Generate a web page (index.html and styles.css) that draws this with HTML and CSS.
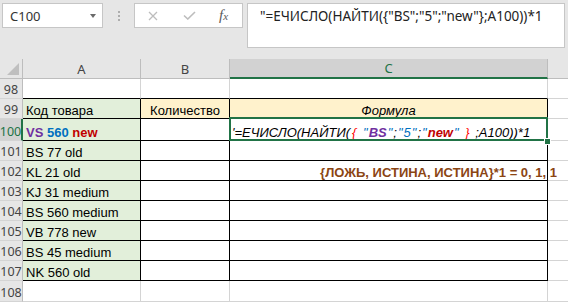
FILE: index.html
```html
<!DOCTYPE html>
<html lang="ru">
<head>
    <meta charset="UTF-8">
    <meta name="viewport" content="width=device-width, initial-scale=1.0">
    <title>ЕЧИСЛО и НАЙТИ</title>
    <link rel="stylesheet" href="styles.css">
</head>
<body>
    <div class="topbar">
        <div class="namebox"><span>C100</span><span class="caret"></span></div>
        <div class="grip"><i></i><i></i><i></i></div>
        <div class="fxbtns">
            <svg class="cancel" width="10" height="10" viewBox="0 0 10 10"><path d="M1 1L9 9M9 1L1 9" stroke="#bdbdbd" stroke-width="1.3" fill="none"/></svg>
            <svg class="enter" width="13" height="9" viewBox="0 0 13 9"><path d="M1 4.5L4.8 8L12 1" stroke="#bdbdbd" stroke-width="1.6" fill="none"/></svg>
            <span class="fx">f<span class="fx-x">x</span></span>
        </div>
        <div class="formula">"=ЕЧИСЛО(НАЙТИ({"BS";"5";"new"};A100))*1</div>
    </div>

    <div class="sheet">
        <!-- column headers -->
        <div class="c h corner"><span class="tri"></span></div>
        <div class="c h">A</div>
        <div class="c h">B</div>
        <div class="c h cur">C</div>
        <div class="c h last"></div>

        <div class="c rh">98</div>
        <div class="c bt"></div>
        <div class="c bt"></div>
        <div class="c bt"></div>
        <div class="c last"></div>

        <div class="c rh">99</div>
        <div class="c b green">Код товара</div>
        <div class="c b yellow mid">Количество</div>
        <div class="c b yellow mid it">Формула</div>
        <div class="c last"></div>

        <div class="c rh cur">100</div>
        <div class="c b green bold"><span class="purple">VS</span>&nbsp;<span class="blue">560</span>&nbsp;<span class="red">new</span></div>
        <div class="c b"></div>
        <div class="c b it active">'=ЕЧИСЛО(НАЙТИ(<span class="brace">{</span>&nbsp;<span class="q">"</span><span class="purple bold">BS</span><span class="q">"</span>;<span class="q">"</span><span class="blue">5</span><span class="q">"</span>;<span class="q">"</span><span class="red bold">new</span><span class="q">"</span>&nbsp;<span class="brace">}</span>&nbsp;;A100))*1
            <div class="sel"><i class="handle"></i></div>
        </div>
        <div class="c last"></div>

        <div class="c rh">101</div>
        <div class="c b green">BS 77 old</div>
        <div class="c b"></div>
        <div class="c b"></div>
        <div class="c last"></div>

        <div class="c rh">102</div>
        <div class="c b green">KL 21 old</div>
        <div class="c b"></div>
        <div class="c b end"><span class="note">{ЛОЖЬ, ИСТИНА, ИСТИНА}*1 = 0, 1, 1</span></div>
        <div class="c last"></div>

        <div class="c rh">103</div>
        <div class="c b green">KJ 31 medium</div>
        <div class="c b"></div>
        <div class="c b"></div>
        <div class="c last"></div>

        <div class="c rh">104</div>
        <div class="c b green">BS 560 medium</div>
        <div class="c b"></div>
        <div class="c b"></div>
        <div class="c last"></div>

        <div class="c rh">105</div>
        <div class="c b green">VB 778 new</div>
        <div class="c b"></div>
        <div class="c b"></div>
        <div class="c last"></div>

        <div class="c rh">106</div>
        <div class="c b green">BS 45 medium</div>
        <div class="c b"></div>
        <div class="c b"></div>
        <div class="c last"></div>

        <div class="c rh">107</div>
        <div class="c b green">NK 560 old</div>
        <div class="c b"></div>
        <div class="c b"></div>
        <div class="c last"></div>

        <div class="c rh">108</div>
        <div class="c"></div>
        <div class="c"></div>
        <div class="c"></div>
        <div class="c last"></div>
    </div>
</body>
</html>
```

FILE: styles.css
```css
body {
    margin: 0;
    width: 568px;
    height: 302px;
    overflow: hidden;
    background-color: #fff;
    font-family: "Liberation Sans", Arial, sans-serif;
}

/* formula bar */
.topbar {
    display: flex;
    align-items: flex-start;
    height: 59px;
    padding: 3px 0 0 2px;
    box-sizing: border-box;
    background-color: #e6e6e6;
}

.namebox {
    width: 101px;
    height: 25px;
    box-sizing: border-box;
    border: 1px solid #c6c6c6;
    background-color: #fff;
    display: flex;
    align-items: center;
    justify-content: space-between;
    padding: 0 6px 0 7px;
    font: 13px/18px "Noto Sans", sans-serif;
    color: #333;
}

.caret {
    border-left: 3px solid transparent;
    border-right: 3px solid transparent;
    border-top: 4px solid #6a6a6a;
}

.grip {
    width: 31px;
    height: 25px;
    display: flex;
    flex-direction: column;
    align-items: center;
    justify-content: center;
    gap: 2px;
}

.grip i {
    width: 2px;
    height: 2px;
    background-color: #adadad;
}

.fxbtns {
    width: 109px;
    height: 25px;
    box-sizing: border-box;
    border: 1px solid #c6c6c6;
    background-color: #fff;
    display: flex;
    align-items: center;
    padding-left: 13px;
}

.enter {
    margin-left: 25px;
}

.fx {
    margin-left: 23px;
    font: italic 15px "Liberation Serif", serif;
    color: #5a5a5a;
}

.fx-x {
    font-size: 11px;
}

.formula {
    margin-left: 4px;
    width: 318px;
    height: 45px;
    box-sizing: border-box;
    border: 1px solid #c6c6c6;
    background-color: #fff;
    padding: 3px 0 0 12px;
    font: 13.5px/18px "Noto Sans", sans-serif;
    color: #222;
    white-space: nowrap;
    overflow: hidden;
}

/* sheet grid */
.sheet {
    display: grid;
    grid-template-columns: 23px 118px 89px 318px 20px;
    grid-template-rows: 20px 20px 20px 22px repeat(7, 20px) 21px;
}

.c {
    box-sizing: border-box;
    border-right: 1px solid #d4d4d4;
    border-bottom: 1px solid #d4d4d4;
    display: flex;
    align-items: flex-end;
    padding: 0 3px 1px;
    min-width: 0;
    font-size: 13px;
    line-height: 13px;
    white-space: nowrap;
    color: #000;
}

.c.last {
    border-right: none;
}

.h {
    background-color: #e6e6e6;
    border-color: #bdbdbd;
    align-items: center;
    justify-content: center;
    padding: 0;
    font: 13px/16px "Noto Sans", sans-serif;
    color: #444;
}

.h.cur {
    background-color: #d2d2d2;
    color: #217346;
    border-bottom: 2px solid #217346;
}

.corner {
    align-items: flex-end;
    justify-content: flex-end;
    padding: 0 3px 3px 0;
}

.tri {
    border-left: 12px solid transparent;
    border-bottom: 12px solid #bfbfbf;
}

.rh {
    background-color: #e6e6e6;
    border-right-color: #bdbdbd;
    justify-content: center;
    padding: 0 0 2px;
    font: 12.5px/13px "Noto Sans", sans-serif;
    color: #444;
}

.rh.cur {
    background-color: #d2d2d2;
    color: #217346;
    border-right: 2px solid #217346;
}

.bt {
    border-bottom-color: #000;
}

.b {
    border-right-color: #000;
    border-bottom-color: #000;
}

.green {
    background-color: #e2efda;
}

.yellow {
    background-color: #fff2cc;
}

.mid {
    justify-content: center;
}

.end {
    justify-content: flex-end;
}

.it {
    font-style: italic;
}

.bold {
    font-weight: bold;
}

.purple {
    color: #7030a0;
}

.blue {
    color: #0070c0;
}

.red {
    color: #c00000;
}

.brace {
    color: #ff0000;
    margin: 0 2px;
}

.q {
    color: #0070c0;
    margin: 0 1px;
}

.note {
    margin-right: -13px;
    font-weight: bold;
    color: #8b4513;
}

/* active cell */
.active {
    position: relative;
    padding-left: 2px;
}

.sel {
    position: absolute;
    top: -2px;
    left: -1px;
    right: -1px;
    bottom: -1px;
    border: 2px solid #217346;
    z-index: 2;
}

.handle {
    position: absolute;
    right: -5px;
    bottom: -6px;
    width: 5px;
    height: 5px;
    border: 1px solid #fff;
    background-color: #217346;
}
```
